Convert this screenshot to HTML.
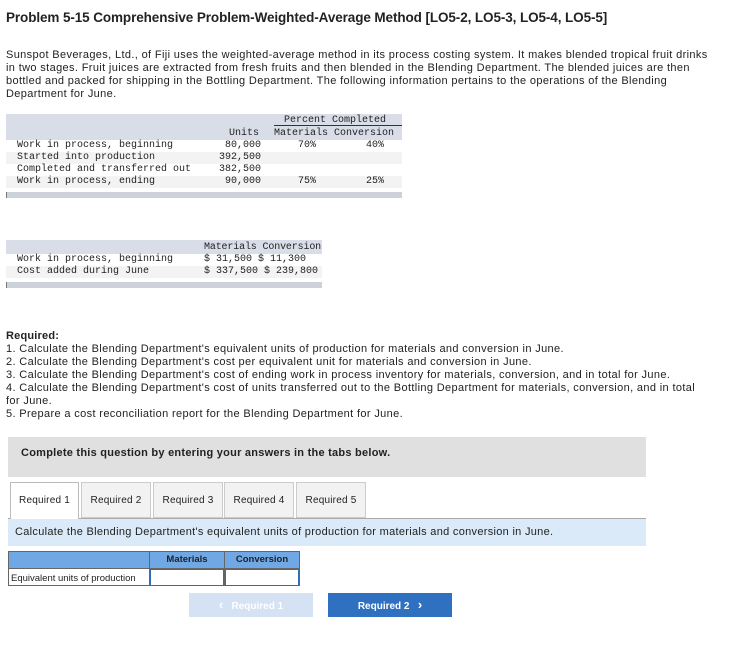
<!DOCTYPE html>
<html><head><style>
*{margin:0;padding:0;box-sizing:border-box}
body{width:735px;height:652px;background:#fff;font-family:"Liberation Sans",sans-serif;color:#222;position:relative;overflow:hidden}
.a{position:absolute;white-space:nowrap}
.m{font-family:"Liberation Mono",monospace;font-size:10px;color:#222}
.p{font-size:11px;line-height:13px;letter-spacing:0.36px}
</style></head><body>
<div class="a" style="left:6px;top:10px;font-size:13.5px;font-weight:bold;letter-spacing:-0.1px">Problem 5-15 Comprehensive Problem-Weighted-Average Method [LO5-2, LO5-3, LO5-4, LO5-5]</div>
<div class="a p" style="left:6px;top:49px">Sunspot Beverages, Ltd., of Fiji uses the weighted-average method in its process costing system. It makes blended tropical fruit drinks<br>in two stages. Fruit juices are extracted from fresh fruits and then blended in the Blending Department. The blended juices are then<br>bottled and packed for shipping in the Bottling Department. The following information pertains to the operations of the Blending<br>Department for June.</div>

<div class="a" style="left:6px;top:114px;width:396px;height:26px;background:#d9dde8"></div>
<div class="a" style="left:6px;top:152px;width:396px;height:12px;background:#f3f3f3"></div>
<div class="a" style="left:6px;top:176px;width:396px;height:12px;background:#f3f3f3"></div>
<div class="a" style="left:6px;top:192px;width:396px;height:6px;background:#cdd1da;border-left:1px solid #777"></div>
<div class="a" style="left:274px;top:125px;width:128px;height:1px;background:#333"></div>
<div class="a m" style="left:284px;top:115px">Percent Completed</div>
<div class="a m" style="left:229px;top:128px">Units</div>
<div class="a m" style="left:274px;top:128px">Materials Conversion</div>
<div class="a m" style="left:17px;top:140px;line-height:12px">Work in process, beginning<br>Started into production<br>Completed and transferred out<br>Work in process, ending</div>
<div class="a m" style="left:211px;top:140px;line-height:12px;text-align:right;width:50px">80,000<br>392,500<br>382,500<br>90,000</div>
<div class="a m" style="left:298px;top:140px">70%</div>
<div class="a m" style="left:366px;top:140px">40%</div>
<div class="a m" style="left:298px;top:176px">75%</div>
<div class="a m" style="left:366px;top:176px">25%</div>

<div class="a" style="left:6px;top:240px;width:316px;height:14px;background:#d9dde8"></div>
<div class="a" style="left:6px;top:266px;width:316px;height:12px;background:#f3f3f3"></div>
<div class="a" style="left:6px;top:282px;width:316px;height:6px;background:#cdd1da;border-left:1px solid #777"></div>
<div class="a m" style="left:204px;top:242px;letter-spacing:-0.15px">Materials Conversion</div>
<div class="a m" style="left:17px;top:254px;line-height:12px">Work in process, beginning<br>Cost added during June</div>
<div class="a m" style="left:204px;top:254px;line-height:12px">$ 31,500 $ 11,300<br>$ 337,500 $ 239,800</div>

<div class="a p" style="left:6px;top:330px;font-weight:bold;letter-spacing:0.2px">Required:</div>
<div class="a p" style="left:6px;top:343px">1. Calculate the Blending Department's equivalent units of production for materials and conversion in June.<br>2. Calculate the Blending Department's cost per equivalent unit for materials and conversion in June.<br>3. Calculate the Blending Department's cost of ending work in process inventory for materials, conversion, and in total for June.<br>4. Calculate the Blending Department's cost of units transferred out to the Bottling Department for materials, conversion, and in total<br>for June.<br>5. Prepare a cost reconciliation report for the Blending Department for June.</div>

<div class="a" style="left:8px;top:437px;width:638px;height:40px;background:#e0e0e0"></div>
<div class="a" style="left:21px;top:447px;font-size:11px;font-weight:bold;color:#222;letter-spacing:0.25px">Complete this question by entering your answers in the tabs below.</div>

<div class="a" style="left:8px;top:518px;width:638px;height:28px;background:#dbeaf8;border-top:1px solid #aaa"></div>
<div class="a" style="left:10px;top:482px;width:69px;height:37px;background:#fff;border:1px solid #bbb;border-bottom:none;font-size:10px;letter-spacing:0.2px;text-align:center;line-height:36px">Required 1</div>
<div class="a" style="left:81px;top:482px;width:70px;height:36px;background:#f2f2f2;border:1px solid #ccc;font-size:10px;letter-spacing:0.2px;text-align:center;line-height:36px">Required 2</div>
<div class="a" style="left:153px;top:482px;width:70px;height:36px;background:#f2f2f2;border:1px solid #ccc;font-size:10px;letter-spacing:0.2px;text-align:center;line-height:36px">Required 3</div>
<div class="a" style="left:224px;top:482px;width:70px;height:36px;background:#f2f2f2;border:1px solid #ccc;font-size:10px;letter-spacing:0.2px;text-align:center;line-height:36px">Required 4</div>
<div class="a" style="left:296px;top:482px;width:70px;height:36px;background:#f2f2f2;border:1px solid #ccc;font-size:10px;letter-spacing:0.2px;text-align:center;line-height:36px">Required 5</div>
<div class="a" style="left:15px;top:526px;font-size:11px;letter-spacing:0.3px">Calculate the Blending Department's equivalent units of production for materials and conversion in June.</div>

<div class="a" style="left:8px;top:551px;width:292px;height:35px;border:1px solid #666;background:#fff"></div>
<div class="a" style="left:9px;top:552px;width:290px;height:17px;background:#70a8e6;border-bottom:1px solid #666"></div>
<div class="a" style="left:149px;top:552px;width:1px;height:34px;background:#666"></div>
<div class="a" style="left:224px;top:552px;width:1px;height:34px;background:#666"></div>
<div class="a" style="left:150px;top:554px;width:74px;text-align:center;font-size:9.5px;font-weight:bold">Materials</div>
<div class="a" style="left:225px;top:554px;width:74px;text-align:center;font-size:9.5px;font-weight:bold">Conversion</div>
<div class="a" style="left:11px;top:573px;font-size:9.5px">Equivalent units of production</div>
<div class="a" style="left:150px;top:569px;width:74px;height:17px;border:1px solid #2f6cb5"></div>
<div class="a" style="left:225px;top:569px;width:74px;height:17px;border:1px solid #2f6cb5"></div>

<div class="a" style="left:189px;top:593px;width:124px;height:24px;background:#d4e2f3;color:#fff;font-size:10px;font-weight:bold;text-align:center;line-height:24px"><span style="font-size:13px">‹</span>&nbsp;&nbsp; Required 1</div>
<div class="a" style="left:328px;top:593px;width:124px;height:24px;background:#2f70c0;color:#fff;font-size:10px;font-weight:bold;text-align:center;line-height:24px">Required 2 &nbsp;&nbsp;<span style="font-size:13px">›</span></div>
</body></html>
